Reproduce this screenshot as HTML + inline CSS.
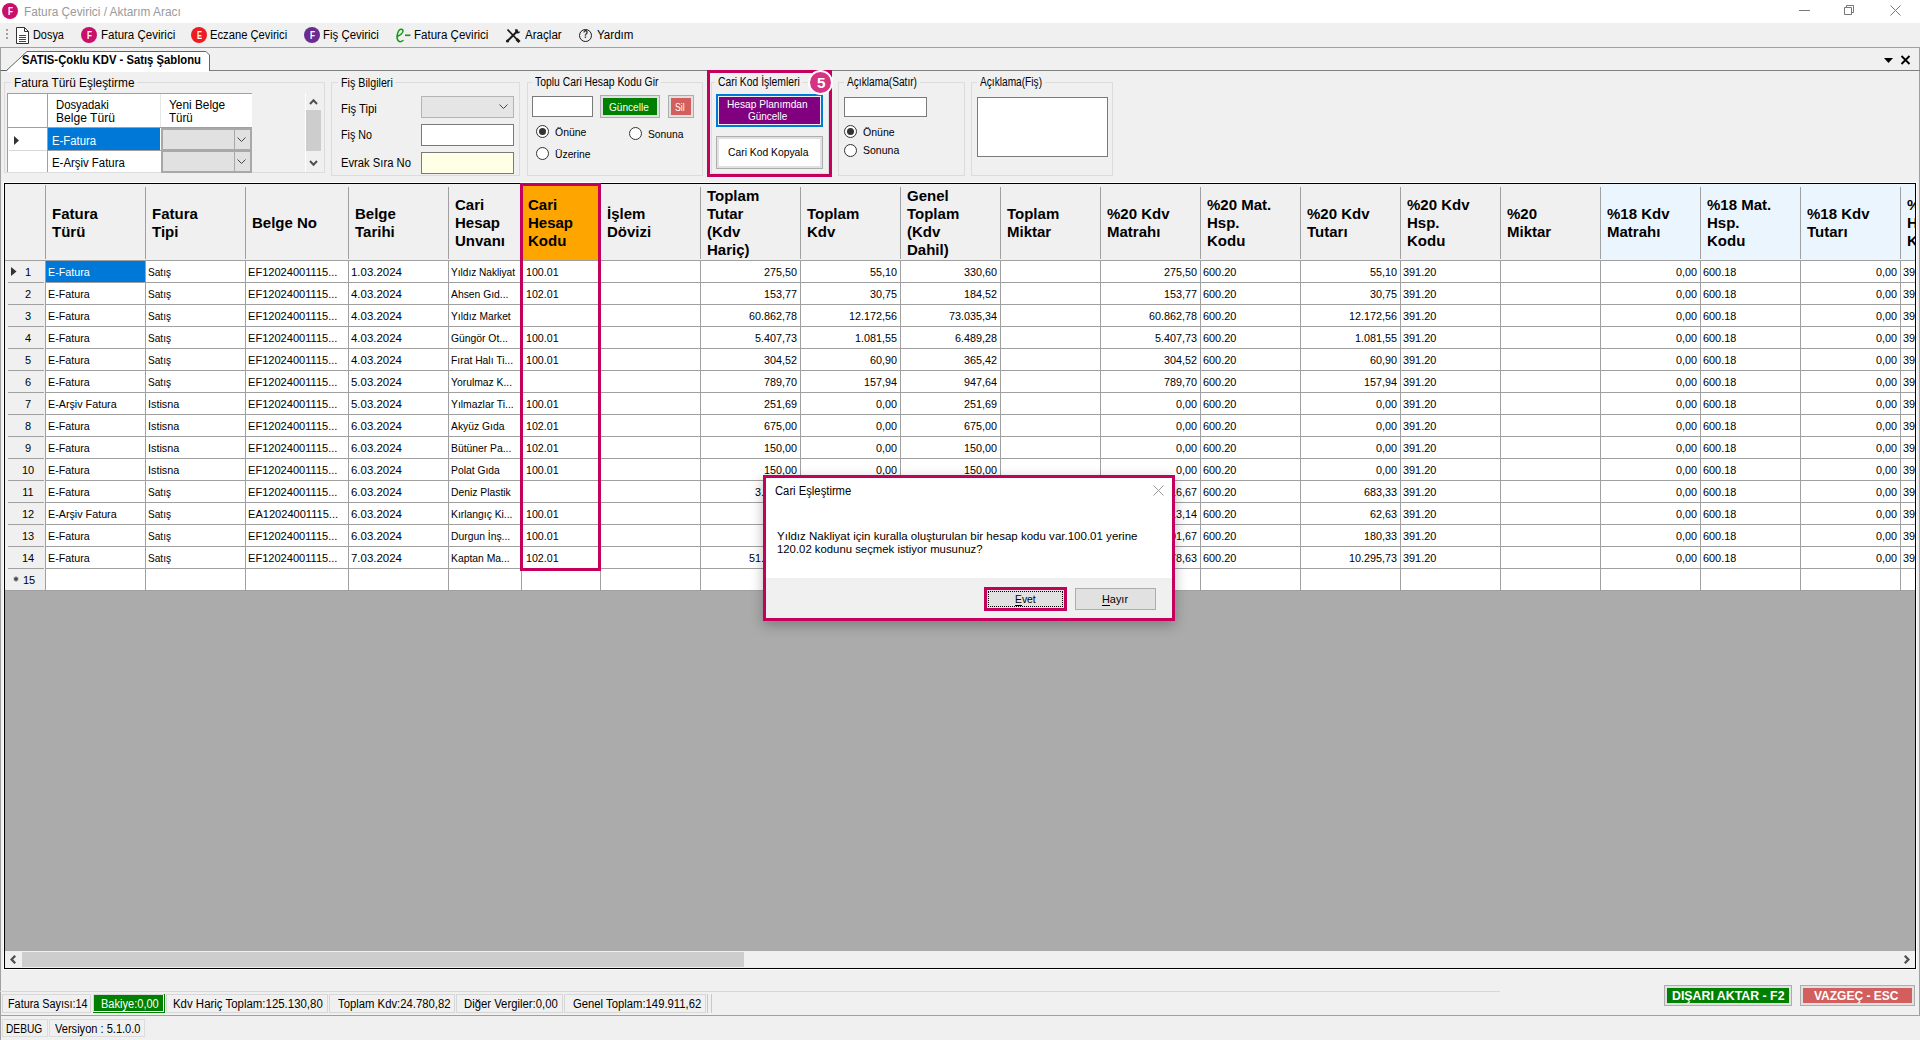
<!DOCTYPE html><html><head><meta charset="utf-8"><title>Fatura Çevirici</title><style>html,body{margin:0;padding:0;}body{width:1920px;height:1040px;overflow:hidden;position:relative;background:#f0f0f0;font-family:"Liberation Sans", sans-serif;}div{position:absolute;box-sizing:border-box;}svg{position:absolute;}.t{white-space:pre;}</style></head><body><div style="left:0px;top:0px;width:1920px;height:23px;background:#fff"></div><div style="left:2px;top:3px;width:16px;height:16px;border-radius:50%;background:#c8106a"></div><div class="t" style="left:7.50px;top:7.00px;font-size:10px;line-height:10px;font-weight:bold;color:#fff;transform:scaleX(0.8183);transform-origin:0 0;">F</div><div class="t" style="left:23.75px;top:6.00px;font-size:12px;line-height:12px;font-weight:normal;color:#9a9a9a;transform:scaleX(0.9876);transform-origin:0 0;">Fatura Çevirici / Aktarım Aracı</div><div style="left:1799px;top:10px;width:11px;height:1px;background:#777"></div><svg style="left:1844px;top:5px" width="11" height="11"><path d="M2.5 2.5V0.5H9.5V7.5H7.5M0.5 2.5H7.5V9.5H0.5Z" fill="none" stroke="#777"/></svg><svg style="left:1890px;top:5px" width="11" height="11"><path d="M0.5 0.5 L10.5 10.5 M10.5 0.5 L0.5 10.5" stroke="#777" stroke-width="1"/></svg><div style="left:6px;top:29px;width:2px;height:2px;background:#a0a0a0"></div><div style="left:6px;top:33px;width:2px;height:2px;background:#a0a0a0"></div><div style="left:6px;top:37px;width:2px;height:2px;background:#a0a0a0"></div><svg style="left:16px;top:27px" width="13" height="17"><path d="M0.5 0.5 H8.5 L12.5 4.5 V16.5 H0.5 Z" fill="#fff" stroke="#333"/><path d="M8.5 0.5V4.5H12.5" fill="none" stroke="#333"/><path d="M3 8.5H10M3 10.5H10M3 12.5H10M3 14.5H10" stroke="#444"/></svg><div class="t" style="left:33.30px;top:29.00px;font-size:12px;line-height:12px;font-weight:normal;color:#000;transform:scaleX(0.9083);transform-origin:0 0;">Dosya</div><div style="left:81px;top:27px;width:16px;height:16px;border-radius:50%;background:#c8106a"></div><div class="t" style="left:86.50px;top:31.00px;font-size:10px;line-height:10px;font-weight:bold;color:#fff;transform:scaleX(0.8183);transform-origin:0 0;">F</div><div class="t" style="left:100.50px;top:29.00px;font-size:12px;line-height:12px;font-weight:normal;color:#000;transform:scaleX(0.9593);transform-origin:0 0;">Fatura Çevirici</div><div style="left:191px;top:27px;width:16px;height:16px;border-radius:50%;background:#ec1c24"></div><div class="t" style="left:196.50px;top:31.00px;font-size:10px;line-height:10px;font-weight:bold;color:#fff;transform:scaleX(0.7496);transform-origin:0 0;">E</div><div class="t" style="left:210.30px;top:29.00px;font-size:12px;line-height:12px;font-weight:normal;color:#000;transform:scaleX(0.9336);transform-origin:0 0;">Eczane Çevirici</div><div style="left:304px;top:27px;width:16px;height:16px;border-radius:50%;background:#6b2c91"></div><div class="t" style="left:309.50px;top:31.00px;font-size:10px;line-height:10px;font-weight:bold;color:#fff;transform:scaleX(0.8183);transform-origin:0 0;">F</div><div class="t" style="left:323.00px;top:29.00px;font-size:12px;line-height:12px;font-weight:normal;color:#000;transform:scaleX(0.9511);transform-origin:0 0;">Fiş Çevirici</div><svg style="left:394px;top:26px" width="18" height="18"><path d="M3 10.5 C6 9.5 9.5 7 9 4.5 C8.6 2.5 5.5 2.8 4.3 5.5 C3 8.5 2.8 12.5 4 14.5 C5 16 7 16 9 14.5" fill="none" stroke="#119911" stroke-width="1.5" stroke-linecap="round"/><path d="M11 9.3H16.5" stroke="#119911" stroke-width="1.6"/></svg><div class="t" style="left:414.20px;top:29.00px;font-size:12px;line-height:12px;font-weight:normal;color:#000;transform:scaleX(0.9618);transform-origin:0 0;">Fatura Çevirici</div><svg style="left:505px;top:28px" width="16" height="15"><path d="M2.5 1.5 L13 12.5" stroke="#1a1a1a" stroke-width="1.8"/><path d="M11.5 11 L14.5 14" stroke="#1a1a1a" stroke-width="3"/><path d="M12 3.5 L2.5 13" stroke="#1a1a1a" stroke-width="2"/><path d="M10.5 1 C9.5 3 10.5 5.5 13 5.5 C14 5.5 15 4.5 15.3 3.8 L13.2 3.6 L12.6 1.4 Z" fill="#1a1a1a"/><circle cx="2.5" cy="13" r="1.6" fill="#1a1a1a"/></svg><div class="t" style="left:524.50px;top:29.00px;font-size:12px;line-height:12px;font-weight:normal;color:#000;transform:scaleX(0.9654);transform-origin:0 0;">Araçlar</div><div style="left:579px;top:29px;width:13px;height:13px;border-radius:50%;border:1.4px solid #1a1a1a"></div><div class="t" style="left:583.00px;top:30.00px;font-size:10px;line-height:10px;font-weight:bold;color:#1a1a1a;transform:scaleX(0.8183);transform-origin:0 0;">?</div><div class="t" style="left:596.60px;top:29.00px;font-size:12px;line-height:12px;font-weight:normal;color:#000;transform:scaleX(0.9633);transform-origin:0 0;">Yardım</div><div style="left:0px;top:47px;width:1920px;height:1px;background:#a0a0a0"></div><div style="left:0px;top:47px;width:1px;height:993px;background:#a0a0a0"></div><div style="left:1919px;top:47px;width:1px;height:969px;background:#a0a0a0"></div><div style="left:0px;top:70px;width:1920px;height:1px;background:#808080"></div><svg style="left:0;top:50px" width="212" height="22"><path d="M1 20.5 H6.5 L27 1.5 H206 L209.5 5 V21" fill="#fff" stroke="#646464" stroke-width="1"/><rect x="7.5" y="20" width="201.5" height="2" fill="#fff"/></svg><div class="t" style="left:22.00px;top:54.00px;font-size:12px;line-height:12px;font-weight:bold;color:#000;transform:scaleX(0.9398);transform-origin:0 0;">SATIS-Çoklu KDV - Satış Şablonu</div><svg style="left:1883px;top:57px" width="12" height="8"><path d="M1 1 H10 L5.5 6 Z" fill="#000"/></svg><svg style="left:1900px;top:55px" width="11" height="10"><path d="M1.5 1 L9.5 9 M9.5 1 L1.5 9" stroke="#000" stroke-width="1.8"/></svg><div style="left:4px;top:82px;width:321px;height:91px;border:1px solid #dcdcdc"></div><div style="left:10.5px;top:80px;width:126.5px;height:5px;background:#f0f0f0"></div><div class="t" style="left:13.50px;top:77.00px;font-size:12px;line-height:12px;font-weight:normal;color:#000;transform:scaleX(0.9892);transform-origin:0 0;">Fatura Türü Eşleştirme</div><div style="left:331px;top:82px;width:189px;height:94px;border:1px solid #dcdcdc"></div><div style="left:337.5px;top:80px;width:57.80000000000001px;height:5px;background:#f0f0f0"></div><div class="t" style="left:340.50px;top:77.00px;font-size:12px;line-height:12px;font-weight:normal;color:#000;transform:scaleX(0.8930);transform-origin:0 0;">Fiş Bilgileri</div><div style="left:527px;top:82px;width:176px;height:94px;border:1px solid #dcdcdc"></div><div style="left:531.6px;top:80px;width:129.39999999999998px;height:5px;background:#f0f0f0"></div><div class="t" style="left:534.60px;top:76.00px;font-size:12px;line-height:12px;font-weight:normal;color:#000;transform:scaleX(0.8645);transform-origin:0 0;">Toplu Cari Hesap Kodu Gir</div><div style="left:711px;top:82px;width:118px;height:92px;border:1px solid #dcdcdc"></div><div style="left:714.5px;top:80px;width:87.70000000000005px;height:5px;background:#f0f0f0"></div><div class="t" style="left:717.50px;top:76.00px;font-size:12px;line-height:12px;font-weight:normal;color:#000;transform:scaleX(0.8628);transform-origin:0 0;">Cari Kod İşlemleri</div><div style="left:838px;top:82px;width:127px;height:94px;border:1px solid #dcdcdc"></div><div style="left:844px;top:80px;width:76px;height:5px;background:#f0f0f0"></div><div class="t" style="left:847.00px;top:76.00px;font-size:12px;line-height:12px;font-weight:normal;color:#000;transform:scaleX(0.8466);transform-origin:0 0;">Açıklama(Satır)</div><div style="left:971px;top:82px;width:142px;height:94px;border:1px solid #dcdcdc"></div><div style="left:977px;top:80px;width:68px;height:5px;background:#f0f0f0"></div><div class="t" style="left:980.00px;top:76.00px;font-size:12px;line-height:12px;font-weight:normal;color:#000;transform:scaleX(0.8455);transform-origin:0 0;">Açıklama(Fiş)</div><div style="left:7px;top:93px;width:245px;height:79px;background:#fff;border-left:1px solid #a0a0a0;border-top:1px solid #a0a0a0"></div><div style="left:47px;top:94px;width:1px;height:78px;background:#a0a0a0"></div><div style="left:160px;top:94px;width:1px;height:34px;background:#e6e6e6"></div><div style="left:8px;top:127px;width:244px;height:1px;background:#a0a0a0"></div><div style="left:9px;top:150px;width:38px;height:1px;background:#d8d8d8"></div><div style="left:48px;top:150px;width:113px;height:1px;background:#a0a0a0"></div><div style="left:48px;top:128px;width:112px;height:22px;background:#0078d7"></div><div class="t" style="left:55.50px;top:99.00px;font-size:12px;line-height:12px;font-weight:normal;color:#000;transform:scaleX(0.9424);transform-origin:0 0;">Dosyadaki</div><div class="t" style="left:55.50px;top:112.00px;font-size:12px;line-height:12px;font-weight:normal;color:#000;transform:scaleX(1.0070);transform-origin:0 0;">Belge Türü</div><div class="t" style="left:169.30px;top:99.00px;font-size:12px;line-height:12px;font-weight:normal;color:#000;transform:scaleX(0.9870);transform-origin:0 0;">Yeni Belge</div><div class="t" style="left:169.30px;top:112.00px;font-size:12px;line-height:12px;font-weight:normal;color:#000;transform:scaleX(0.9606);transform-origin:0 0;">Türü</div><svg style="left:14px;top:136px" width="6" height="10"><path d="M0 0 L5 4.5 L0 9 Z" fill="#333"/></svg><div class="t" style="left:51.50px;top:135.00px;font-size:12px;line-height:12px;font-weight:normal;color:#fff;transform:scaleX(0.9423);transform-origin:0 0;">E-Fatura</div><div class="t" style="left:51.50px;top:157.00px;font-size:12px;line-height:12px;font-weight:normal;color:#000;transform:scaleX(0.9493);transform-origin:0 0;">E-Arşiv Fatura</div><div style="left:161px;top:128px;width:91px;height:23px;background:#e1e1e1;border:2px solid #a8a8a8"></div><div style="left:234px;top:130px;width:1px;height:19px;background:#a8a8a8"></div><svg style="left:237px;top:137px" width="10" height="6"><path d="M0.5 0.5 L4.5 4.5 L8.5 0.5" fill="none" stroke="#444" stroke-width="1"/></svg><div style="left:161px;top:150px;width:91px;height:23px;background:#e1e1e1;border:2px solid #a8a8a8"></div><div style="left:234px;top:152px;width:1px;height:19px;background:#a8a8a8"></div><svg style="left:237px;top:159px" width="10" height="6"><path d="M0.5 0.5 L4.5 4.5 L8.5 0.5" fill="none" stroke="#444" stroke-width="1"/></svg><div style="left:306px;top:110px;width:15px;height:41px;background:#cdcdcd"></div><svg style="left:309px;top:98px" width="10" height="8"><path d="M1 6 L4.5 2.2 L8 6" fill="none" stroke="#505050" stroke-width="2"/></svg><div style="left:305px;top:93px;width:1px;height:79px;background:#fff"></div><svg style="left:309px;top:159px" width="10" height="8"><path d="M1 2 L4.5 5.8 L8 2" fill="none" stroke="#505050" stroke-width="2"/></svg><div class="t" style="left:340.50px;top:103.00px;font-size:12px;line-height:12px;font-weight:normal;color:#000;transform:scaleX(0.9394);transform-origin:0 0;">Fiş Tipi</div><div class="t" style="left:340.50px;top:129.00px;font-size:12px;line-height:12px;font-weight:normal;color:#000;transform:scaleX(0.8913);transform-origin:0 0;">Fiş No</div><div class="t" style="left:340.50px;top:157.00px;font-size:12px;line-height:12px;font-weight:normal;color:#000;transform:scaleX(0.9359);transform-origin:0 0;">Evrak Sıra No</div><div style="left:421px;top:96px;width:93px;height:22px;background:#e5e5e5;border:1px solid #b4b4b4"></div><svg style="left:499px;top:104px" width="10" height="6"><path d="M0.5 0.5 L4.5 4.5 L8.5 0.5" fill="none" stroke="#444" stroke-width="1"/></svg><div style="left:421px;top:124px;width:93px;height:22px;background:#fff;border:1px solid #7a7a7a"></div><div style="left:421px;top:152px;width:93px;height:22px;background:#ffffe6;border:1px solid #7a7a7a"></div><div style="left:532px;top:96px;width:61px;height:21px;background:#fff;border:1px solid #7a7a7a"></div><div style="left:600px;top:95px;width:60px;height:23px;background:#008000;border:1px solid #adadad;box-shadow:inset 0 0 0 2px #e1e1e1"></div><div class="t" style="left:608.60px;top:102.00px;font-size:11px;line-height:11px;font-weight:normal;color:#fff;transform:scaleX(0.9167);transform-origin:0 0;">Güncelle</div><div style="left:668px;top:95px;width:26px;height:23px;background:#d25e5e;border:1px solid #adadad;box-shadow:inset 0 0 0 2px #e1e1e1"></div><div class="t" style="left:674.70px;top:102.00px;font-size:11px;line-height:11px;font-weight:normal;color:#fff;transform:scaleX(0.7937);transform-origin:0 0;">Sil</div><div style="left:536.0px;top:125.0px;width:13px;height:13px;border-radius:50%;background:#fff;border:1px solid #333"></div><div style="left:539.0px;top:128.0px;width:7px;height:7px;border-radius:50%;background:#333"></div><div class="t" style="left:554.70px;top:127.00px;font-size:11px;line-height:11px;font-weight:normal;color:#000;transform:scaleX(0.9509);transform-origin:0 0;">Önüne</div><div style="left:629.0px;top:127.0px;width:13px;height:13px;border-radius:50%;background:#fff;border:1px solid #333"></div><div class="t" style="left:647.70px;top:129.00px;font-size:11px;line-height:11px;font-weight:normal;color:#000;transform:scaleX(0.9357);transform-origin:0 0;">Sonuna</div><div style="left:536.0px;top:147.0px;width:13px;height:13px;border-radius:50%;background:#fff;border:1px solid #333"></div><div class="t" style="left:554.70px;top:149.00px;font-size:11px;line-height:11px;font-weight:normal;color:#000;transform:scaleX(0.9392);transform-origin:0 0;">Üzerine</div><div style="left:707px;top:70px;width:125px;height:107px;border:3px solid #c4005c"></div><div style="left:716px;top:94px;width:107px;height:33px;background:#800080;border:2px solid #0078d7;box-shadow:inset 0 0 0 1px #f0f0f0"></div><div class="t" style="left:727.40px;top:99.00px;font-size:11px;line-height:11px;font-weight:normal;color:#fff;transform:scaleX(0.9218);transform-origin:0 0;">Hesap Planımdan</div><div class="t" style="left:747.90px;top:111.00px;font-size:11px;line-height:11px;font-weight:normal;color:#fff;transform:scaleX(0.9052);transform-origin:0 0;">Güncelle</div><div style="left:716px;top:136px;width:107px;height:33px;background:#fff;border:1px solid #adadad;box-shadow:inset 0 0 0 2px #e1e1e1"></div><div class="t" style="left:727.60px;top:147.00px;font-size:11px;line-height:11px;font-weight:normal;color:#000;transform:scaleX(0.9391);transform-origin:0 0;">Cari Kod Kopyala</div><div style="left:808px;top:70px;width:25px;height:25px;border-radius:50%;background:#d63384;border:2px solid #fff"></div><div class="t" style="left:816.50px;top:76.00px;font-size:14px;line-height:14px;font-weight:bold;color:#fff;transform:scaleX(1.0920);transform-origin:0 0;">5</div><div style="left:844px;top:97px;width:83px;height:20px;background:#fff;border:1px solid #7a7a7a"></div><div style="left:844.0px;top:124.75px;width:13px;height:13px;border-radius:50%;background:#fff;border:1px solid #333"></div><div style="left:847.0px;top:127.75px;width:7px;height:7px;border-radius:50%;background:#333"></div><div class="t" style="left:862.50px;top:127.00px;font-size:11px;line-height:11px;font-weight:normal;color:#000;transform:scaleX(0.9615);transform-origin:0 0;">Önüne</div><div style="left:844.0px;top:143.5px;width:13px;height:13px;border-radius:50%;background:#fff;border:1px solid #333"></div><div class="t" style="left:863.00px;top:145.00px;font-size:11px;line-height:11px;font-weight:normal;color:#000;transform:scaleX(0.9555);transform-origin:0 0;">Sonuna</div><div style="left:977px;top:97px;width:131px;height:60px;background:#fff;border:1px solid #7a7a7a"></div><div style="left:4px;top:183px;width:1912px;height:786px;border:1px solid #000;background:#ababab"></div><div style="left:3px;top:182px;width:1914px;height:1px;background:#fff"></div><div style="left:1916px;top:182px;width:1px;height:788px;background:#fff"></div><div style="left:3px;top:969px;width:1914px;height:1px;background:#fff"></div><div style="left:3px;top:182px;width:1px;height:788px;background:#fff"></div><div style="left:5px;top:184px;width:1910px;height:76px;background:#f0f0f0"></div><div style="left:1601px;top:184px;width:314px;height:76px;background:#ebf5fd"></div><div style="left:522px;top:184px;width:78px;height:76px;background:#ffa500"></div><div style="left:5px;top:261px;width:1910px;height:330px;background:#fff"></div><div style="left:5px;top:261px;width:40px;height:330px;background:#f0f0f0"></div><div style="left:5px;top:260px;width:1910px;height:1px;background:#a0a0a0"></div><div style="left:46px;top:282px;width:1869px;height:1px;background:#a0a0a0"></div><div style="left:8px;top:282px;width:36px;height:1px;background:#a0a0a0"></div><div style="left:46px;top:304px;width:1869px;height:1px;background:#a0a0a0"></div><div style="left:8px;top:304px;width:36px;height:1px;background:#a0a0a0"></div><div style="left:46px;top:326px;width:1869px;height:1px;background:#a0a0a0"></div><div style="left:8px;top:326px;width:36px;height:1px;background:#a0a0a0"></div><div style="left:46px;top:348px;width:1869px;height:1px;background:#a0a0a0"></div><div style="left:8px;top:348px;width:36px;height:1px;background:#a0a0a0"></div><div style="left:46px;top:370px;width:1869px;height:1px;background:#a0a0a0"></div><div style="left:8px;top:370px;width:36px;height:1px;background:#a0a0a0"></div><div style="left:46px;top:392px;width:1869px;height:1px;background:#a0a0a0"></div><div style="left:8px;top:392px;width:36px;height:1px;background:#a0a0a0"></div><div style="left:46px;top:414px;width:1869px;height:1px;background:#a0a0a0"></div><div style="left:8px;top:414px;width:36px;height:1px;background:#a0a0a0"></div><div style="left:46px;top:436px;width:1869px;height:1px;background:#a0a0a0"></div><div style="left:8px;top:436px;width:36px;height:1px;background:#a0a0a0"></div><div style="left:46px;top:458px;width:1869px;height:1px;background:#a0a0a0"></div><div style="left:8px;top:458px;width:36px;height:1px;background:#a0a0a0"></div><div style="left:46px;top:480px;width:1869px;height:1px;background:#a0a0a0"></div><div style="left:8px;top:480px;width:36px;height:1px;background:#a0a0a0"></div><div style="left:46px;top:502px;width:1869px;height:1px;background:#a0a0a0"></div><div style="left:8px;top:502px;width:36px;height:1px;background:#a0a0a0"></div><div style="left:46px;top:524px;width:1869px;height:1px;background:#a0a0a0"></div><div style="left:8px;top:524px;width:36px;height:1px;background:#a0a0a0"></div><div style="left:46px;top:546px;width:1869px;height:1px;background:#a0a0a0"></div><div style="left:8px;top:546px;width:36px;height:1px;background:#a0a0a0"></div><div style="left:46px;top:568px;width:1869px;height:1px;background:#a0a0a0"></div><div style="left:8px;top:568px;width:36px;height:1px;background:#a0a0a0"></div><div style="left:46px;top:590px;width:1869px;height:1px;background:#a0a0a0"></div><div style="left:5px;top:590px;width:40px;height:1px;background:#a0a0a0"></div><div style="left:45px;top:185px;width:1px;height:74px;background:#a0a0a0"></div><div style="left:45px;top:261px;width:1px;height:330px;background:#a0a0a0"></div><div style="left:145px;top:187px;width:1px;height:72px;background:#a0a0a0"></div><div style="left:145px;top:261px;width:1px;height:330px;background:#a0a0a0"></div><div style="left:245px;top:187px;width:1px;height:72px;background:#a0a0a0"></div><div style="left:245px;top:261px;width:1px;height:330px;background:#a0a0a0"></div><div style="left:348px;top:187px;width:1px;height:72px;background:#a0a0a0"></div><div style="left:348px;top:261px;width:1px;height:330px;background:#a0a0a0"></div><div style="left:448px;top:187px;width:1px;height:72px;background:#a0a0a0"></div><div style="left:448px;top:261px;width:1px;height:330px;background:#a0a0a0"></div><div style="left:521px;top:187px;width:1px;height:72px;background:#a0a0a0"></div><div style="left:521px;top:261px;width:1px;height:330px;background:#a0a0a0"></div><div style="left:600px;top:187px;width:1px;height:72px;background:#a0a0a0"></div><div style="left:600px;top:261px;width:1px;height:330px;background:#a0a0a0"></div><div style="left:700px;top:187px;width:1px;height:72px;background:#a0a0a0"></div><div style="left:700px;top:261px;width:1px;height:330px;background:#a0a0a0"></div><div style="left:800px;top:187px;width:1px;height:72px;background:#a0a0a0"></div><div style="left:800px;top:261px;width:1px;height:330px;background:#a0a0a0"></div><div style="left:900px;top:187px;width:1px;height:72px;background:#a0a0a0"></div><div style="left:900px;top:261px;width:1px;height:330px;background:#a0a0a0"></div><div style="left:1000px;top:187px;width:1px;height:72px;background:#a0a0a0"></div><div style="left:1000px;top:261px;width:1px;height:330px;background:#a0a0a0"></div><div style="left:1100px;top:187px;width:1px;height:72px;background:#a0a0a0"></div><div style="left:1100px;top:261px;width:1px;height:330px;background:#a0a0a0"></div><div style="left:1200px;top:187px;width:1px;height:72px;background:#a0a0a0"></div><div style="left:1200px;top:261px;width:1px;height:330px;background:#a0a0a0"></div><div style="left:1300px;top:187px;width:1px;height:72px;background:#a0a0a0"></div><div style="left:1300px;top:261px;width:1px;height:330px;background:#a0a0a0"></div><div style="left:1400px;top:187px;width:1px;height:72px;background:#a0a0a0"></div><div style="left:1400px;top:261px;width:1px;height:330px;background:#a0a0a0"></div><div style="left:1500px;top:187px;width:1px;height:72px;background:#a0a0a0"></div><div style="left:1500px;top:261px;width:1px;height:330px;background:#a0a0a0"></div><div style="left:1600px;top:187px;width:1px;height:72px;background:#a0a0a0"></div><div style="left:1600px;top:261px;width:1px;height:330px;background:#a0a0a0"></div><div style="left:1700px;top:187px;width:1px;height:72px;background:#a0a0a0"></div><div style="left:1700px;top:261px;width:1px;height:330px;background:#a0a0a0"></div><div style="left:1800px;top:187px;width:1px;height:72px;background:#a0a0a0"></div><div style="left:1800px;top:261px;width:1px;height:330px;background:#a0a0a0"></div><div style="left:1900px;top:187px;width:1px;height:72px;background:#a0a0a0"></div><div style="left:1900px;top:261px;width:1px;height:330px;background:#a0a0a0"></div><div style="left:5px;top:184px;width:1910px;height:76px;overflow:hidden"><div class="t" style="left:47px;top:22.00px;font-size:15px;line-height:15px;font-weight:bold">Fatura</div><div class="t" style="left:47px;top:40.00px;font-size:15px;line-height:15px;font-weight:bold">Türü</div><div class="t" style="left:147px;top:22.00px;font-size:15px;line-height:15px;font-weight:bold">Fatura</div><div class="t" style="left:147px;top:40.00px;font-size:15px;line-height:15px;font-weight:bold">Tipi</div><div class="t" style="left:247px;top:31.00px;font-size:15px;line-height:15px;font-weight:bold">Belge No</div><div class="t" style="left:350px;top:22.00px;font-size:15px;line-height:15px;font-weight:bold">Belge</div><div class="t" style="left:350px;top:40.00px;font-size:15px;line-height:15px;font-weight:bold">Tarihi</div><div class="t" style="left:450px;top:13.00px;font-size:15px;line-height:15px;font-weight:bold">Cari</div><div class="t" style="left:450px;top:31.00px;font-size:15px;line-height:15px;font-weight:bold">Hesap</div><div class="t" style="left:450px;top:49.00px;font-size:15px;line-height:15px;font-weight:bold">Unvanı</div><div class="t" style="left:523px;top:13.00px;font-size:15px;line-height:15px;font-weight:bold">Cari</div><div class="t" style="left:523px;top:31.00px;font-size:15px;line-height:15px;font-weight:bold">Hesap</div><div class="t" style="left:523px;top:49.00px;font-size:15px;line-height:15px;font-weight:bold">Kodu</div><div class="t" style="left:602px;top:22.00px;font-size:15px;line-height:15px;font-weight:bold">İşlem</div><div class="t" style="left:602px;top:40.00px;font-size:15px;line-height:15px;font-weight:bold">Dövizi</div><div class="t" style="left:702px;top:4.00px;font-size:15px;line-height:15px;font-weight:bold">Toplam</div><div class="t" style="left:702px;top:22.00px;font-size:15px;line-height:15px;font-weight:bold">Tutar</div><div class="t" style="left:702px;top:40.00px;font-size:15px;line-height:15px;font-weight:bold">(Kdv</div><div class="t" style="left:702px;top:58.00px;font-size:15px;line-height:15px;font-weight:bold">Hariç)</div><div class="t" style="left:802px;top:22.00px;font-size:15px;line-height:15px;font-weight:bold">Toplam</div><div class="t" style="left:802px;top:40.00px;font-size:15px;line-height:15px;font-weight:bold">Kdv</div><div class="t" style="left:902px;top:4.00px;font-size:15px;line-height:15px;font-weight:bold">Genel</div><div class="t" style="left:902px;top:22.00px;font-size:15px;line-height:15px;font-weight:bold">Toplam</div><div class="t" style="left:902px;top:40.00px;font-size:15px;line-height:15px;font-weight:bold">(Kdv</div><div class="t" style="left:902px;top:58.00px;font-size:15px;line-height:15px;font-weight:bold">Dahil)</div><div class="t" style="left:1002px;top:22.00px;font-size:15px;line-height:15px;font-weight:bold">Toplam</div><div class="t" style="left:1002px;top:40.00px;font-size:15px;line-height:15px;font-weight:bold">Miktar</div><div class="t" style="left:1102px;top:22.00px;font-size:15px;line-height:15px;font-weight:bold">%20 Kdv</div><div class="t" style="left:1102px;top:40.00px;font-size:15px;line-height:15px;font-weight:bold">Matrahı</div><div class="t" style="left:1202px;top:13.00px;font-size:15px;line-height:15px;font-weight:bold">%20 Mat.</div><div class="t" style="left:1202px;top:31.00px;font-size:15px;line-height:15px;font-weight:bold">Hsp.</div><div class="t" style="left:1202px;top:49.00px;font-size:15px;line-height:15px;font-weight:bold">Kodu</div><div class="t" style="left:1302px;top:22.00px;font-size:15px;line-height:15px;font-weight:bold">%20 Kdv</div><div class="t" style="left:1302px;top:40.00px;font-size:15px;line-height:15px;font-weight:bold">Tutarı</div><div class="t" style="left:1402px;top:13.00px;font-size:15px;line-height:15px;font-weight:bold">%20 Kdv</div><div class="t" style="left:1402px;top:31.00px;font-size:15px;line-height:15px;font-weight:bold">Hsp.</div><div class="t" style="left:1402px;top:49.00px;font-size:15px;line-height:15px;font-weight:bold">Kodu</div><div class="t" style="left:1502px;top:22.00px;font-size:15px;line-height:15px;font-weight:bold">%20</div><div class="t" style="left:1502px;top:40.00px;font-size:15px;line-height:15px;font-weight:bold">Miktar</div><div class="t" style="left:1602px;top:22.00px;font-size:15px;line-height:15px;font-weight:bold">%18 Kdv</div><div class="t" style="left:1602px;top:40.00px;font-size:15px;line-height:15px;font-weight:bold">Matrahı</div><div class="t" style="left:1702px;top:13.00px;font-size:15px;line-height:15px;font-weight:bold">%18 Mat.</div><div class="t" style="left:1702px;top:31.00px;font-size:15px;line-height:15px;font-weight:bold">Hsp.</div><div class="t" style="left:1702px;top:49.00px;font-size:15px;line-height:15px;font-weight:bold">Kodu</div><div class="t" style="left:1802px;top:22.00px;font-size:15px;line-height:15px;font-weight:bold">%18 Kdv</div><div class="t" style="left:1802px;top:40.00px;font-size:15px;line-height:15px;font-weight:bold">Tutarı</div><div class="t" style="left:1902px;top:13.00px;font-size:15px;line-height:15px;font-weight:bold">%18 Kdv</div><div class="t" style="left:1902px;top:31.00px;font-size:15px;line-height:15px;font-weight:bold">Hsp.</div><div class="t" style="left:1902px;top:49.00px;font-size:15px;line-height:15px;font-weight:bold">Kodu</div></div><div style="left:46px;top:261px;width:99px;height:21px;background:#0078d7"></div><div style="left:5px;top:261px;width:1910px;height:330px;overflow:hidden"><div class="t" style="left:43px;top:6.00px;font-size:11px;line-height:11px;color:#fff;transform:scaleX(0.977);transform-origin:0 0">E-Fatura</div><div class="t" style="left:143px;top:6.00px;font-size:11px;line-height:11px;color:#000;transform:scaleX(0.917);transform-origin:0 0">Satış</div><div class="t" style="left:243px;top:6.00px;font-size:11px;line-height:11px;color:#000;transform:scaleX(1.006);transform-origin:0 0">EF12024001115...</div><div class="t" style="left:346px;top:6.00px;font-size:11px;line-height:11px;color:#000;transform:scaleX(1.040);transform-origin:0 0">1.03.2024</div><div class="t" style="left:446px;top:6.00px;font-size:11px;line-height:11px;color:#000;transform:scaleX(0.918);transform-origin:0 0">Yıldız Nakliyat</div><div class="t" style="left:520.5px;top:6.00px;font-size:11px;line-height:11px;color:#000;transform:scaleX(0.970);transform-origin:0 0">100.01</div><div class="t" style="left:495px;width:297px;text-align:right;top:6.00px;font-size:11px;line-height:11px;color:#000;transform:scaleX(0.980);transform-origin:100% 0">275,50</div><div class="t" style="left:595px;width:297px;text-align:right;top:6.00px;font-size:11px;line-height:11px;color:#000;transform:scaleX(0.980);transform-origin:100% 0">55,10</div><div class="t" style="left:695px;width:297px;text-align:right;top:6.00px;font-size:11px;line-height:11px;color:#000;transform:scaleX(0.980);transform-origin:100% 0">330,60</div><div class="t" style="left:895px;width:297px;text-align:right;top:6.00px;font-size:11px;line-height:11px;color:#000;transform:scaleX(0.980);transform-origin:100% 0">275,50</div><div class="t" style="left:1198px;top:6.00px;font-size:11px;line-height:11px;color:#000;transform:scaleX(0.990);transform-origin:0 0">600.20</div><div class="t" style="left:1095px;width:297px;text-align:right;top:6.00px;font-size:11px;line-height:11px;color:#000;transform:scaleX(0.980);transform-origin:100% 0">55,10</div><div class="t" style="left:1398px;top:6.00px;font-size:11px;line-height:11px;color:#000;transform:scaleX(0.990);transform-origin:0 0">391.20</div><div class="t" style="left:1395px;width:297px;text-align:right;top:6.00px;font-size:11px;line-height:11px;color:#000;transform:scaleX(0.980);transform-origin:100% 0">0,00</div><div class="t" style="left:1698px;top:6.00px;font-size:11px;line-height:11px;color:#000;transform:scaleX(0.990);transform-origin:0 0">600.18</div><div class="t" style="left:1595px;width:297px;text-align:right;top:6.00px;font-size:11px;line-height:11px;color:#000;transform:scaleX(0.980);transform-origin:100% 0">0,00</div><div class="t" style="left:1898px;top:6.00px;font-size:11px;line-height:11px;color:#000;transform:scaleX(0.990);transform-origin:0 0">39</div><div class="t" style="left:3px;width:40px;text-align:center;top:6.00px;font-size:11px;line-height:11px">1</div><div class="t" style="left:43px;top:28.00px;font-size:11px;line-height:11px;color:#000;transform:scaleX(0.977);transform-origin:0 0">E-Fatura</div><div class="t" style="left:143px;top:28.00px;font-size:11px;line-height:11px;color:#000;transform:scaleX(0.917);transform-origin:0 0">Satış</div><div class="t" style="left:243px;top:28.00px;font-size:11px;line-height:11px;color:#000;transform:scaleX(1.006);transform-origin:0 0">EF12024001115...</div><div class="t" style="left:346px;top:28.00px;font-size:11px;line-height:11px;color:#000;transform:scaleX(1.040);transform-origin:0 0">4.03.2024</div><div class="t" style="left:446px;top:28.00px;font-size:11px;line-height:11px;color:#000;transform:scaleX(0.940);transform-origin:0 0">Ahsen Gıd...</div><div class="t" style="left:520.5px;top:28.00px;font-size:11px;line-height:11px;color:#000;transform:scaleX(0.970);transform-origin:0 0">102.01</div><div class="t" style="left:495px;width:297px;text-align:right;top:28.00px;font-size:11px;line-height:11px;color:#000;transform:scaleX(0.980);transform-origin:100% 0">153,77</div><div class="t" style="left:595px;width:297px;text-align:right;top:28.00px;font-size:11px;line-height:11px;color:#000;transform:scaleX(0.980);transform-origin:100% 0">30,75</div><div class="t" style="left:695px;width:297px;text-align:right;top:28.00px;font-size:11px;line-height:11px;color:#000;transform:scaleX(0.980);transform-origin:100% 0">184,52</div><div class="t" style="left:895px;width:297px;text-align:right;top:28.00px;font-size:11px;line-height:11px;color:#000;transform:scaleX(0.980);transform-origin:100% 0">153,77</div><div class="t" style="left:1198px;top:28.00px;font-size:11px;line-height:11px;color:#000;transform:scaleX(0.990);transform-origin:0 0">600.20</div><div class="t" style="left:1095px;width:297px;text-align:right;top:28.00px;font-size:11px;line-height:11px;color:#000;transform:scaleX(0.980);transform-origin:100% 0">30,75</div><div class="t" style="left:1398px;top:28.00px;font-size:11px;line-height:11px;color:#000;transform:scaleX(0.990);transform-origin:0 0">391.20</div><div class="t" style="left:1395px;width:297px;text-align:right;top:28.00px;font-size:11px;line-height:11px;color:#000;transform:scaleX(0.980);transform-origin:100% 0">0,00</div><div class="t" style="left:1698px;top:28.00px;font-size:11px;line-height:11px;color:#000;transform:scaleX(0.990);transform-origin:0 0">600.18</div><div class="t" style="left:1595px;width:297px;text-align:right;top:28.00px;font-size:11px;line-height:11px;color:#000;transform:scaleX(0.980);transform-origin:100% 0">0,00</div><div class="t" style="left:1898px;top:28.00px;font-size:11px;line-height:11px;color:#000;transform:scaleX(0.990);transform-origin:0 0">39</div><div class="t" style="left:3px;width:40px;text-align:center;top:28.00px;font-size:11px;line-height:11px">2</div><div class="t" style="left:43px;top:50.00px;font-size:11px;line-height:11px;color:#000;transform:scaleX(0.977);transform-origin:0 0">E-Fatura</div><div class="t" style="left:143px;top:50.00px;font-size:11px;line-height:11px;color:#000;transform:scaleX(0.917);transform-origin:0 0">Satış</div><div class="t" style="left:243px;top:50.00px;font-size:11px;line-height:11px;color:#000;transform:scaleX(1.006);transform-origin:0 0">EF12024001115...</div><div class="t" style="left:346px;top:50.00px;font-size:11px;line-height:11px;color:#000;transform:scaleX(1.040);transform-origin:0 0">4.03.2024</div><div class="t" style="left:446px;top:50.00px;font-size:11px;line-height:11px;color:#000;transform:scaleX(0.930);transform-origin:0 0">Yıldız Market</div><div class="t" style="left:495px;width:297px;text-align:right;top:50.00px;font-size:11px;line-height:11px;color:#000;transform:scaleX(0.980);transform-origin:100% 0">60.862,78</div><div class="t" style="left:595px;width:297px;text-align:right;top:50.00px;font-size:11px;line-height:11px;color:#000;transform:scaleX(0.980);transform-origin:100% 0">12.172,56</div><div class="t" style="left:695px;width:297px;text-align:right;top:50.00px;font-size:11px;line-height:11px;color:#000;transform:scaleX(0.980);transform-origin:100% 0">73.035,34</div><div class="t" style="left:895px;width:297px;text-align:right;top:50.00px;font-size:11px;line-height:11px;color:#000;transform:scaleX(0.980);transform-origin:100% 0">60.862,78</div><div class="t" style="left:1198px;top:50.00px;font-size:11px;line-height:11px;color:#000;transform:scaleX(0.990);transform-origin:0 0">600.20</div><div class="t" style="left:1095px;width:297px;text-align:right;top:50.00px;font-size:11px;line-height:11px;color:#000;transform:scaleX(0.980);transform-origin:100% 0">12.172,56</div><div class="t" style="left:1398px;top:50.00px;font-size:11px;line-height:11px;color:#000;transform:scaleX(0.990);transform-origin:0 0">391.20</div><div class="t" style="left:1395px;width:297px;text-align:right;top:50.00px;font-size:11px;line-height:11px;color:#000;transform:scaleX(0.980);transform-origin:100% 0">0,00</div><div class="t" style="left:1698px;top:50.00px;font-size:11px;line-height:11px;color:#000;transform:scaleX(0.990);transform-origin:0 0">600.18</div><div class="t" style="left:1595px;width:297px;text-align:right;top:50.00px;font-size:11px;line-height:11px;color:#000;transform:scaleX(0.980);transform-origin:100% 0">0,00</div><div class="t" style="left:1898px;top:50.00px;font-size:11px;line-height:11px;color:#000;transform:scaleX(0.990);transform-origin:0 0">39</div><div class="t" style="left:3px;width:40px;text-align:center;top:50.00px;font-size:11px;line-height:11px">3</div><div class="t" style="left:43px;top:72.00px;font-size:11px;line-height:11px;color:#000;transform:scaleX(0.977);transform-origin:0 0">E-Fatura</div><div class="t" style="left:143px;top:72.00px;font-size:11px;line-height:11px;color:#000;transform:scaleX(0.917);transform-origin:0 0">Satış</div><div class="t" style="left:243px;top:72.00px;font-size:11px;line-height:11px;color:#000;transform:scaleX(1.006);transform-origin:0 0">EF12024001115...</div><div class="t" style="left:346px;top:72.00px;font-size:11px;line-height:11px;color:#000;transform:scaleX(1.040);transform-origin:0 0">4.03.2024</div><div class="t" style="left:446px;top:72.00px;font-size:11px;line-height:11px;color:#000;transform:scaleX(0.940);transform-origin:0 0">Güngör Ot...</div><div class="t" style="left:520.5px;top:72.00px;font-size:11px;line-height:11px;color:#000;transform:scaleX(0.970);transform-origin:0 0">100.01</div><div class="t" style="left:495px;width:297px;text-align:right;top:72.00px;font-size:11px;line-height:11px;color:#000;transform:scaleX(0.980);transform-origin:100% 0">5.407,73</div><div class="t" style="left:595px;width:297px;text-align:right;top:72.00px;font-size:11px;line-height:11px;color:#000;transform:scaleX(0.980);transform-origin:100% 0">1.081,55</div><div class="t" style="left:695px;width:297px;text-align:right;top:72.00px;font-size:11px;line-height:11px;color:#000;transform:scaleX(0.980);transform-origin:100% 0">6.489,28</div><div class="t" style="left:895px;width:297px;text-align:right;top:72.00px;font-size:11px;line-height:11px;color:#000;transform:scaleX(0.980);transform-origin:100% 0">5.407,73</div><div class="t" style="left:1198px;top:72.00px;font-size:11px;line-height:11px;color:#000;transform:scaleX(0.990);transform-origin:0 0">600.20</div><div class="t" style="left:1095px;width:297px;text-align:right;top:72.00px;font-size:11px;line-height:11px;color:#000;transform:scaleX(0.980);transform-origin:100% 0">1.081,55</div><div class="t" style="left:1398px;top:72.00px;font-size:11px;line-height:11px;color:#000;transform:scaleX(0.990);transform-origin:0 0">391.20</div><div class="t" style="left:1395px;width:297px;text-align:right;top:72.00px;font-size:11px;line-height:11px;color:#000;transform:scaleX(0.980);transform-origin:100% 0">0,00</div><div class="t" style="left:1698px;top:72.00px;font-size:11px;line-height:11px;color:#000;transform:scaleX(0.990);transform-origin:0 0">600.18</div><div class="t" style="left:1595px;width:297px;text-align:right;top:72.00px;font-size:11px;line-height:11px;color:#000;transform:scaleX(0.980);transform-origin:100% 0">0,00</div><div class="t" style="left:1898px;top:72.00px;font-size:11px;line-height:11px;color:#000;transform:scaleX(0.990);transform-origin:0 0">39</div><div class="t" style="left:3px;width:40px;text-align:center;top:72.00px;font-size:11px;line-height:11px">4</div><div class="t" style="left:43px;top:94.00px;font-size:11px;line-height:11px;color:#000;transform:scaleX(0.977);transform-origin:0 0">E-Fatura</div><div class="t" style="left:143px;top:94.00px;font-size:11px;line-height:11px;color:#000;transform:scaleX(0.917);transform-origin:0 0">Satış</div><div class="t" style="left:243px;top:94.00px;font-size:11px;line-height:11px;color:#000;transform:scaleX(1.006);transform-origin:0 0">EF12024001115...</div><div class="t" style="left:346px;top:94.00px;font-size:11px;line-height:11px;color:#000;transform:scaleX(1.040);transform-origin:0 0">4.03.2024</div><div class="t" style="left:446px;top:94.00px;font-size:11px;line-height:11px;color:#000;transform:scaleX(0.940);transform-origin:0 0">Fırat Halı Ti...</div><div class="t" style="left:520.5px;top:94.00px;font-size:11px;line-height:11px;color:#000;transform:scaleX(0.970);transform-origin:0 0">100.01</div><div class="t" style="left:495px;width:297px;text-align:right;top:94.00px;font-size:11px;line-height:11px;color:#000;transform:scaleX(0.980);transform-origin:100% 0">304,52</div><div class="t" style="left:595px;width:297px;text-align:right;top:94.00px;font-size:11px;line-height:11px;color:#000;transform:scaleX(0.980);transform-origin:100% 0">60,90</div><div class="t" style="left:695px;width:297px;text-align:right;top:94.00px;font-size:11px;line-height:11px;color:#000;transform:scaleX(0.980);transform-origin:100% 0">365,42</div><div class="t" style="left:895px;width:297px;text-align:right;top:94.00px;font-size:11px;line-height:11px;color:#000;transform:scaleX(0.980);transform-origin:100% 0">304,52</div><div class="t" style="left:1198px;top:94.00px;font-size:11px;line-height:11px;color:#000;transform:scaleX(0.990);transform-origin:0 0">600.20</div><div class="t" style="left:1095px;width:297px;text-align:right;top:94.00px;font-size:11px;line-height:11px;color:#000;transform:scaleX(0.980);transform-origin:100% 0">60,90</div><div class="t" style="left:1398px;top:94.00px;font-size:11px;line-height:11px;color:#000;transform:scaleX(0.990);transform-origin:0 0">391.20</div><div class="t" style="left:1395px;width:297px;text-align:right;top:94.00px;font-size:11px;line-height:11px;color:#000;transform:scaleX(0.980);transform-origin:100% 0">0,00</div><div class="t" style="left:1698px;top:94.00px;font-size:11px;line-height:11px;color:#000;transform:scaleX(0.990);transform-origin:0 0">600.18</div><div class="t" style="left:1595px;width:297px;text-align:right;top:94.00px;font-size:11px;line-height:11px;color:#000;transform:scaleX(0.980);transform-origin:100% 0">0,00</div><div class="t" style="left:1898px;top:94.00px;font-size:11px;line-height:11px;color:#000;transform:scaleX(0.990);transform-origin:0 0">39</div><div class="t" style="left:3px;width:40px;text-align:center;top:94.00px;font-size:11px;line-height:11px">5</div><div class="t" style="left:43px;top:116.00px;font-size:11px;line-height:11px;color:#000;transform:scaleX(0.977);transform-origin:0 0">E-Fatura</div><div class="t" style="left:143px;top:116.00px;font-size:11px;line-height:11px;color:#000;transform:scaleX(0.917);transform-origin:0 0">Satış</div><div class="t" style="left:243px;top:116.00px;font-size:11px;line-height:11px;color:#000;transform:scaleX(1.006);transform-origin:0 0">EF12024001115...</div><div class="t" style="left:346px;top:116.00px;font-size:11px;line-height:11px;color:#000;transform:scaleX(1.040);transform-origin:0 0">5.03.2024</div><div class="t" style="left:446px;top:116.00px;font-size:11px;line-height:11px;color:#000;transform:scaleX(0.940);transform-origin:0 0">Yorulmaz K...</div><div class="t" style="left:495px;width:297px;text-align:right;top:116.00px;font-size:11px;line-height:11px;color:#000;transform:scaleX(0.980);transform-origin:100% 0">789,70</div><div class="t" style="left:595px;width:297px;text-align:right;top:116.00px;font-size:11px;line-height:11px;color:#000;transform:scaleX(0.980);transform-origin:100% 0">157,94</div><div class="t" style="left:695px;width:297px;text-align:right;top:116.00px;font-size:11px;line-height:11px;color:#000;transform:scaleX(0.980);transform-origin:100% 0">947,64</div><div class="t" style="left:895px;width:297px;text-align:right;top:116.00px;font-size:11px;line-height:11px;color:#000;transform:scaleX(0.980);transform-origin:100% 0">789,70</div><div class="t" style="left:1198px;top:116.00px;font-size:11px;line-height:11px;color:#000;transform:scaleX(0.990);transform-origin:0 0">600.20</div><div class="t" style="left:1095px;width:297px;text-align:right;top:116.00px;font-size:11px;line-height:11px;color:#000;transform:scaleX(0.980);transform-origin:100% 0">157,94</div><div class="t" style="left:1398px;top:116.00px;font-size:11px;line-height:11px;color:#000;transform:scaleX(0.990);transform-origin:0 0">391.20</div><div class="t" style="left:1395px;width:297px;text-align:right;top:116.00px;font-size:11px;line-height:11px;color:#000;transform:scaleX(0.980);transform-origin:100% 0">0,00</div><div class="t" style="left:1698px;top:116.00px;font-size:11px;line-height:11px;color:#000;transform:scaleX(0.990);transform-origin:0 0">600.18</div><div class="t" style="left:1595px;width:297px;text-align:right;top:116.00px;font-size:11px;line-height:11px;color:#000;transform:scaleX(0.980);transform-origin:100% 0">0,00</div><div class="t" style="left:1898px;top:116.00px;font-size:11px;line-height:11px;color:#000;transform:scaleX(0.990);transform-origin:0 0">39</div><div class="t" style="left:3px;width:40px;text-align:center;top:116.00px;font-size:11px;line-height:11px">6</div><div class="t" style="left:43px;top:138.00px;font-size:11px;line-height:11px;color:#000;transform:scaleX(0.977);transform-origin:0 0">E-Arşiv Fatura</div><div class="t" style="left:143px;top:138.00px;font-size:11px;line-height:11px;color:#000;transform:scaleX(0.983);transform-origin:0 0">Istisna</div><div class="t" style="left:243px;top:138.00px;font-size:11px;line-height:11px;color:#000;transform:scaleX(1.006);transform-origin:0 0">EF12024001115...</div><div class="t" style="left:346px;top:138.00px;font-size:11px;line-height:11px;color:#000;transform:scaleX(1.040);transform-origin:0 0">5.03.2024</div><div class="t" style="left:446px;top:138.00px;font-size:11px;line-height:11px;color:#000;transform:scaleX(0.940);transform-origin:0 0">Yılmazlar Ti...</div><div class="t" style="left:520.5px;top:138.00px;font-size:11px;line-height:11px;color:#000;transform:scaleX(0.970);transform-origin:0 0">100.01</div><div class="t" style="left:495px;width:297px;text-align:right;top:138.00px;font-size:11px;line-height:11px;color:#000;transform:scaleX(0.980);transform-origin:100% 0">251,69</div><div class="t" style="left:595px;width:297px;text-align:right;top:138.00px;font-size:11px;line-height:11px;color:#000;transform:scaleX(0.980);transform-origin:100% 0">0,00</div><div class="t" style="left:695px;width:297px;text-align:right;top:138.00px;font-size:11px;line-height:11px;color:#000;transform:scaleX(0.980);transform-origin:100% 0">251,69</div><div class="t" style="left:895px;width:297px;text-align:right;top:138.00px;font-size:11px;line-height:11px;color:#000;transform:scaleX(0.980);transform-origin:100% 0">0,00</div><div class="t" style="left:1198px;top:138.00px;font-size:11px;line-height:11px;color:#000;transform:scaleX(0.990);transform-origin:0 0">600.20</div><div class="t" style="left:1095px;width:297px;text-align:right;top:138.00px;font-size:11px;line-height:11px;color:#000;transform:scaleX(0.980);transform-origin:100% 0">0,00</div><div class="t" style="left:1398px;top:138.00px;font-size:11px;line-height:11px;color:#000;transform:scaleX(0.990);transform-origin:0 0">391.20</div><div class="t" style="left:1395px;width:297px;text-align:right;top:138.00px;font-size:11px;line-height:11px;color:#000;transform:scaleX(0.980);transform-origin:100% 0">0,00</div><div class="t" style="left:1698px;top:138.00px;font-size:11px;line-height:11px;color:#000;transform:scaleX(0.990);transform-origin:0 0">600.18</div><div class="t" style="left:1595px;width:297px;text-align:right;top:138.00px;font-size:11px;line-height:11px;color:#000;transform:scaleX(0.980);transform-origin:100% 0">0,00</div><div class="t" style="left:1898px;top:138.00px;font-size:11px;line-height:11px;color:#000;transform:scaleX(0.990);transform-origin:0 0">39</div><div class="t" style="left:3px;width:40px;text-align:center;top:138.00px;font-size:11px;line-height:11px">7</div><div class="t" style="left:43px;top:160.00px;font-size:11px;line-height:11px;color:#000;transform:scaleX(0.977);transform-origin:0 0">E-Fatura</div><div class="t" style="left:143px;top:160.00px;font-size:11px;line-height:11px;color:#000;transform:scaleX(0.983);transform-origin:0 0">Istisna</div><div class="t" style="left:243px;top:160.00px;font-size:11px;line-height:11px;color:#000;transform:scaleX(1.006);transform-origin:0 0">EF12024001115...</div><div class="t" style="left:346px;top:160.00px;font-size:11px;line-height:11px;color:#000;transform:scaleX(1.040);transform-origin:0 0">6.03.2024</div><div class="t" style="left:446px;top:160.00px;font-size:11px;line-height:11px;color:#000;transform:scaleX(0.940);transform-origin:0 0">Akyüz Gıda</div><div class="t" style="left:520.5px;top:160.00px;font-size:11px;line-height:11px;color:#000;transform:scaleX(0.970);transform-origin:0 0">102.01</div><div class="t" style="left:495px;width:297px;text-align:right;top:160.00px;font-size:11px;line-height:11px;color:#000;transform:scaleX(0.980);transform-origin:100% 0">675,00</div><div class="t" style="left:595px;width:297px;text-align:right;top:160.00px;font-size:11px;line-height:11px;color:#000;transform:scaleX(0.980);transform-origin:100% 0">0,00</div><div class="t" style="left:695px;width:297px;text-align:right;top:160.00px;font-size:11px;line-height:11px;color:#000;transform:scaleX(0.980);transform-origin:100% 0">675,00</div><div class="t" style="left:895px;width:297px;text-align:right;top:160.00px;font-size:11px;line-height:11px;color:#000;transform:scaleX(0.980);transform-origin:100% 0">0,00</div><div class="t" style="left:1198px;top:160.00px;font-size:11px;line-height:11px;color:#000;transform:scaleX(0.990);transform-origin:0 0">600.20</div><div class="t" style="left:1095px;width:297px;text-align:right;top:160.00px;font-size:11px;line-height:11px;color:#000;transform:scaleX(0.980);transform-origin:100% 0">0,00</div><div class="t" style="left:1398px;top:160.00px;font-size:11px;line-height:11px;color:#000;transform:scaleX(0.990);transform-origin:0 0">391.20</div><div class="t" style="left:1395px;width:297px;text-align:right;top:160.00px;font-size:11px;line-height:11px;color:#000;transform:scaleX(0.980);transform-origin:100% 0">0,00</div><div class="t" style="left:1698px;top:160.00px;font-size:11px;line-height:11px;color:#000;transform:scaleX(0.990);transform-origin:0 0">600.18</div><div class="t" style="left:1595px;width:297px;text-align:right;top:160.00px;font-size:11px;line-height:11px;color:#000;transform:scaleX(0.980);transform-origin:100% 0">0,00</div><div class="t" style="left:1898px;top:160.00px;font-size:11px;line-height:11px;color:#000;transform:scaleX(0.990);transform-origin:0 0">39</div><div class="t" style="left:3px;width:40px;text-align:center;top:160.00px;font-size:11px;line-height:11px">8</div><div class="t" style="left:43px;top:182.00px;font-size:11px;line-height:11px;color:#000;transform:scaleX(0.977);transform-origin:0 0">E-Fatura</div><div class="t" style="left:143px;top:182.00px;font-size:11px;line-height:11px;color:#000;transform:scaleX(0.983);transform-origin:0 0">Istisna</div><div class="t" style="left:243px;top:182.00px;font-size:11px;line-height:11px;color:#000;transform:scaleX(1.006);transform-origin:0 0">EF12024001115...</div><div class="t" style="left:346px;top:182.00px;font-size:11px;line-height:11px;color:#000;transform:scaleX(1.040);transform-origin:0 0">6.03.2024</div><div class="t" style="left:446px;top:182.00px;font-size:11px;line-height:11px;color:#000;transform:scaleX(0.940);transform-origin:0 0">Bütüner Pa...</div><div class="t" style="left:520.5px;top:182.00px;font-size:11px;line-height:11px;color:#000;transform:scaleX(0.970);transform-origin:0 0">102.01</div><div class="t" style="left:495px;width:297px;text-align:right;top:182.00px;font-size:11px;line-height:11px;color:#000;transform:scaleX(0.980);transform-origin:100% 0">150,00</div><div class="t" style="left:595px;width:297px;text-align:right;top:182.00px;font-size:11px;line-height:11px;color:#000;transform:scaleX(0.980);transform-origin:100% 0">0,00</div><div class="t" style="left:695px;width:297px;text-align:right;top:182.00px;font-size:11px;line-height:11px;color:#000;transform:scaleX(0.980);transform-origin:100% 0">150,00</div><div class="t" style="left:895px;width:297px;text-align:right;top:182.00px;font-size:11px;line-height:11px;color:#000;transform:scaleX(0.980);transform-origin:100% 0">0,00</div><div class="t" style="left:1198px;top:182.00px;font-size:11px;line-height:11px;color:#000;transform:scaleX(0.990);transform-origin:0 0">600.20</div><div class="t" style="left:1095px;width:297px;text-align:right;top:182.00px;font-size:11px;line-height:11px;color:#000;transform:scaleX(0.980);transform-origin:100% 0">0,00</div><div class="t" style="left:1398px;top:182.00px;font-size:11px;line-height:11px;color:#000;transform:scaleX(0.990);transform-origin:0 0">391.20</div><div class="t" style="left:1395px;width:297px;text-align:right;top:182.00px;font-size:11px;line-height:11px;color:#000;transform:scaleX(0.980);transform-origin:100% 0">0,00</div><div class="t" style="left:1698px;top:182.00px;font-size:11px;line-height:11px;color:#000;transform:scaleX(0.990);transform-origin:0 0">600.18</div><div class="t" style="left:1595px;width:297px;text-align:right;top:182.00px;font-size:11px;line-height:11px;color:#000;transform:scaleX(0.980);transform-origin:100% 0">0,00</div><div class="t" style="left:1898px;top:182.00px;font-size:11px;line-height:11px;color:#000;transform:scaleX(0.990);transform-origin:0 0">39</div><div class="t" style="left:3px;width:40px;text-align:center;top:182.00px;font-size:11px;line-height:11px">9</div><div class="t" style="left:43px;top:204.00px;font-size:11px;line-height:11px;color:#000;transform:scaleX(0.977);transform-origin:0 0">E-Fatura</div><div class="t" style="left:143px;top:204.00px;font-size:11px;line-height:11px;color:#000;transform:scaleX(0.983);transform-origin:0 0">Istisna</div><div class="t" style="left:243px;top:204.00px;font-size:11px;line-height:11px;color:#000;transform:scaleX(1.006);transform-origin:0 0">EF12024001115...</div><div class="t" style="left:346px;top:204.00px;font-size:11px;line-height:11px;color:#000;transform:scaleX(1.040);transform-origin:0 0">6.03.2024</div><div class="t" style="left:446px;top:204.00px;font-size:11px;line-height:11px;color:#000;transform:scaleX(0.940);transform-origin:0 0">Polat Gıda</div><div class="t" style="left:520.5px;top:204.00px;font-size:11px;line-height:11px;color:#000;transform:scaleX(0.970);transform-origin:0 0">100.01</div><div class="t" style="left:495px;width:297px;text-align:right;top:204.00px;font-size:11px;line-height:11px;color:#000;transform:scaleX(0.980);transform-origin:100% 0">150,00</div><div class="t" style="left:595px;width:297px;text-align:right;top:204.00px;font-size:11px;line-height:11px;color:#000;transform:scaleX(0.980);transform-origin:100% 0">0,00</div><div class="t" style="left:695px;width:297px;text-align:right;top:204.00px;font-size:11px;line-height:11px;color:#000;transform:scaleX(0.980);transform-origin:100% 0">150,00</div><div class="t" style="left:895px;width:297px;text-align:right;top:204.00px;font-size:11px;line-height:11px;color:#000;transform:scaleX(0.980);transform-origin:100% 0">0,00</div><div class="t" style="left:1198px;top:204.00px;font-size:11px;line-height:11px;color:#000;transform:scaleX(0.990);transform-origin:0 0">600.20</div><div class="t" style="left:1095px;width:297px;text-align:right;top:204.00px;font-size:11px;line-height:11px;color:#000;transform:scaleX(0.980);transform-origin:100% 0">0,00</div><div class="t" style="left:1398px;top:204.00px;font-size:11px;line-height:11px;color:#000;transform:scaleX(0.990);transform-origin:0 0">391.20</div><div class="t" style="left:1395px;width:297px;text-align:right;top:204.00px;font-size:11px;line-height:11px;color:#000;transform:scaleX(0.980);transform-origin:100% 0">0,00</div><div class="t" style="left:1698px;top:204.00px;font-size:11px;line-height:11px;color:#000;transform:scaleX(0.990);transform-origin:0 0">600.18</div><div class="t" style="left:1595px;width:297px;text-align:right;top:204.00px;font-size:11px;line-height:11px;color:#000;transform:scaleX(0.980);transform-origin:100% 0">0,00</div><div class="t" style="left:1898px;top:204.00px;font-size:11px;line-height:11px;color:#000;transform:scaleX(0.990);transform-origin:0 0">39</div><div class="t" style="left:3px;width:40px;text-align:center;top:204.00px;font-size:11px;line-height:11px">10</div><div class="t" style="left:43px;top:226.00px;font-size:11px;line-height:11px;color:#000;transform:scaleX(0.977);transform-origin:0 0">E-Fatura</div><div class="t" style="left:143px;top:226.00px;font-size:11px;line-height:11px;color:#000;transform:scaleX(0.917);transform-origin:0 0">Satış</div><div class="t" style="left:243px;top:226.00px;font-size:11px;line-height:11px;color:#000;transform:scaleX(1.006);transform-origin:0 0">EF12024001115...</div><div class="t" style="left:346px;top:226.00px;font-size:11px;line-height:11px;color:#000;transform:scaleX(1.040);transform-origin:0 0">6.03.2024</div><div class="t" style="left:446px;top:226.00px;font-size:11px;line-height:11px;color:#000;transform:scaleX(0.940);transform-origin:0 0">Deniz Plastik</div><div class="t" style="left:495px;width:297px;text-align:right;top:226.00px;font-size:11px;line-height:11px;color:#000;transform:scaleX(0.980);transform-origin:100% 0">3.416,67</div><div class="t" style="left:595px;width:297px;text-align:right;top:226.00px;font-size:11px;line-height:11px;color:#000;transform:scaleX(0.980);transform-origin:100% 0">683,33</div><div class="t" style="left:695px;width:297px;text-align:right;top:226.00px;font-size:11px;line-height:11px;color:#000;transform:scaleX(0.980);transform-origin:100% 0">4.100,00</div><div class="t" style="left:895px;width:297px;text-align:right;top:226.00px;font-size:11px;line-height:11px;color:#000;transform:scaleX(0.980);transform-origin:100% 0">3.416,67</div><div class="t" style="left:1198px;top:226.00px;font-size:11px;line-height:11px;color:#000;transform:scaleX(0.990);transform-origin:0 0">600.20</div><div class="t" style="left:1095px;width:297px;text-align:right;top:226.00px;font-size:11px;line-height:11px;color:#000;transform:scaleX(0.980);transform-origin:100% 0">683,33</div><div class="t" style="left:1398px;top:226.00px;font-size:11px;line-height:11px;color:#000;transform:scaleX(0.990);transform-origin:0 0">391.20</div><div class="t" style="left:1395px;width:297px;text-align:right;top:226.00px;font-size:11px;line-height:11px;color:#000;transform:scaleX(0.980);transform-origin:100% 0">0,00</div><div class="t" style="left:1698px;top:226.00px;font-size:11px;line-height:11px;color:#000;transform:scaleX(0.990);transform-origin:0 0">600.18</div><div class="t" style="left:1595px;width:297px;text-align:right;top:226.00px;font-size:11px;line-height:11px;color:#000;transform:scaleX(0.980);transform-origin:100% 0">0,00</div><div class="t" style="left:1898px;top:226.00px;font-size:11px;line-height:11px;color:#000;transform:scaleX(0.990);transform-origin:0 0">39</div><div class="t" style="left:3px;width:40px;text-align:center;top:226.00px;font-size:11px;line-height:11px">11</div><div class="t" style="left:43px;top:248.00px;font-size:11px;line-height:11px;color:#000;transform:scaleX(0.977);transform-origin:0 0">E-Arşiv Fatura</div><div class="t" style="left:143px;top:248.00px;font-size:11px;line-height:11px;color:#000;transform:scaleX(0.917);transform-origin:0 0">Satış</div><div class="t" style="left:243px;top:248.00px;font-size:11px;line-height:11px;color:#000;transform:scaleX(1.006);transform-origin:0 0">EA12024001115...</div><div class="t" style="left:346px;top:248.00px;font-size:11px;line-height:11px;color:#000;transform:scaleX(1.040);transform-origin:0 0">6.03.2024</div><div class="t" style="left:446px;top:248.00px;font-size:11px;line-height:11px;color:#000;transform:scaleX(0.940);transform-origin:0 0">Kırlangıç Ki...</div><div class="t" style="left:520.5px;top:248.00px;font-size:11px;line-height:11px;color:#000;transform:scaleX(0.970);transform-origin:0 0">100.01</div><div class="t" style="left:495px;width:297px;text-align:right;top:248.00px;font-size:11px;line-height:11px;color:#000;transform:scaleX(0.980);transform-origin:100% 0">313,14</div><div class="t" style="left:595px;width:297px;text-align:right;top:248.00px;font-size:11px;line-height:11px;color:#000;transform:scaleX(0.980);transform-origin:100% 0">62,63</div><div class="t" style="left:695px;width:297px;text-align:right;top:248.00px;font-size:11px;line-height:11px;color:#000;transform:scaleX(0.980);transform-origin:100% 0">375,77</div><div class="t" style="left:895px;width:297px;text-align:right;top:248.00px;font-size:11px;line-height:11px;color:#000;transform:scaleX(0.980);transform-origin:100% 0">313,14</div><div class="t" style="left:1198px;top:248.00px;font-size:11px;line-height:11px;color:#000;transform:scaleX(0.990);transform-origin:0 0">600.20</div><div class="t" style="left:1095px;width:297px;text-align:right;top:248.00px;font-size:11px;line-height:11px;color:#000;transform:scaleX(0.980);transform-origin:100% 0">62,63</div><div class="t" style="left:1398px;top:248.00px;font-size:11px;line-height:11px;color:#000;transform:scaleX(0.990);transform-origin:0 0">391.20</div><div class="t" style="left:1395px;width:297px;text-align:right;top:248.00px;font-size:11px;line-height:11px;color:#000;transform:scaleX(0.980);transform-origin:100% 0">0,00</div><div class="t" style="left:1698px;top:248.00px;font-size:11px;line-height:11px;color:#000;transform:scaleX(0.990);transform-origin:0 0">600.18</div><div class="t" style="left:1595px;width:297px;text-align:right;top:248.00px;font-size:11px;line-height:11px;color:#000;transform:scaleX(0.980);transform-origin:100% 0">0,00</div><div class="t" style="left:1898px;top:248.00px;font-size:11px;line-height:11px;color:#000;transform:scaleX(0.990);transform-origin:0 0">39</div><div class="t" style="left:3px;width:40px;text-align:center;top:248.00px;font-size:11px;line-height:11px">12</div><div class="t" style="left:43px;top:270.00px;font-size:11px;line-height:11px;color:#000;transform:scaleX(0.977);transform-origin:0 0">E-Fatura</div><div class="t" style="left:143px;top:270.00px;font-size:11px;line-height:11px;color:#000;transform:scaleX(0.917);transform-origin:0 0">Satış</div><div class="t" style="left:243px;top:270.00px;font-size:11px;line-height:11px;color:#000;transform:scaleX(1.006);transform-origin:0 0">EF12024001115...</div><div class="t" style="left:346px;top:270.00px;font-size:11px;line-height:11px;color:#000;transform:scaleX(1.040);transform-origin:0 0">6.03.2024</div><div class="t" style="left:446px;top:270.00px;font-size:11px;line-height:11px;color:#000;transform:scaleX(0.940);transform-origin:0 0">Durgun İnş...</div><div class="t" style="left:520.5px;top:270.00px;font-size:11px;line-height:11px;color:#000;transform:scaleX(0.970);transform-origin:0 0">100.01</div><div class="t" style="left:495px;width:297px;text-align:right;top:270.00px;font-size:11px;line-height:11px;color:#000;transform:scaleX(0.980);transform-origin:100% 0">901,67</div><div class="t" style="left:595px;width:297px;text-align:right;top:270.00px;font-size:11px;line-height:11px;color:#000;transform:scaleX(0.980);transform-origin:100% 0">180,33</div><div class="t" style="left:695px;width:297px;text-align:right;top:270.00px;font-size:11px;line-height:11px;color:#000;transform:scaleX(0.980);transform-origin:100% 0">1.082,00</div><div class="t" style="left:895px;width:297px;text-align:right;top:270.00px;font-size:11px;line-height:11px;color:#000;transform:scaleX(0.980);transform-origin:100% 0">901,67</div><div class="t" style="left:1198px;top:270.00px;font-size:11px;line-height:11px;color:#000;transform:scaleX(0.990);transform-origin:0 0">600.20</div><div class="t" style="left:1095px;width:297px;text-align:right;top:270.00px;font-size:11px;line-height:11px;color:#000;transform:scaleX(0.980);transform-origin:100% 0">180,33</div><div class="t" style="left:1398px;top:270.00px;font-size:11px;line-height:11px;color:#000;transform:scaleX(0.990);transform-origin:0 0">391.20</div><div class="t" style="left:1395px;width:297px;text-align:right;top:270.00px;font-size:11px;line-height:11px;color:#000;transform:scaleX(0.980);transform-origin:100% 0">0,00</div><div class="t" style="left:1698px;top:270.00px;font-size:11px;line-height:11px;color:#000;transform:scaleX(0.990);transform-origin:0 0">600.18</div><div class="t" style="left:1595px;width:297px;text-align:right;top:270.00px;font-size:11px;line-height:11px;color:#000;transform:scaleX(0.980);transform-origin:100% 0">0,00</div><div class="t" style="left:1898px;top:270.00px;font-size:11px;line-height:11px;color:#000;transform:scaleX(0.990);transform-origin:0 0">39</div><div class="t" style="left:3px;width:40px;text-align:center;top:270.00px;font-size:11px;line-height:11px">13</div><div class="t" style="left:43px;top:292.00px;font-size:11px;line-height:11px;color:#000;transform:scaleX(0.977);transform-origin:0 0">E-Fatura</div><div class="t" style="left:143px;top:292.00px;font-size:11px;line-height:11px;color:#000;transform:scaleX(0.917);transform-origin:0 0">Satış</div><div class="t" style="left:243px;top:292.00px;font-size:11px;line-height:11px;color:#000;transform:scaleX(1.006);transform-origin:0 0">EF12024001115...</div><div class="t" style="left:346px;top:292.00px;font-size:11px;line-height:11px;color:#000;transform:scaleX(1.040);transform-origin:0 0">7.03.2024</div><div class="t" style="left:446px;top:292.00px;font-size:11px;line-height:11px;color:#000;transform:scaleX(0.940);transform-origin:0 0">Kaptan Ma...</div><div class="t" style="left:520.5px;top:292.00px;font-size:11px;line-height:11px;color:#000;transform:scaleX(0.970);transform-origin:0 0">102.01</div><div class="t" style="left:495px;width:297px;text-align:right;top:292.00px;font-size:11px;line-height:11px;color:#000;transform:scaleX(0.980);transform-origin:100% 0">51.478,63</div><div class="t" style="left:595px;width:297px;text-align:right;top:292.00px;font-size:11px;line-height:11px;color:#000;transform:scaleX(0.980);transform-origin:100% 0">10.295,73</div><div class="t" style="left:695px;width:297px;text-align:right;top:292.00px;font-size:11px;line-height:11px;color:#000;transform:scaleX(0.980);transform-origin:100% 0">61.774,36</div><div class="t" style="left:895px;width:297px;text-align:right;top:292.00px;font-size:11px;line-height:11px;color:#000;transform:scaleX(0.980);transform-origin:100% 0">51.478,63</div><div class="t" style="left:1198px;top:292.00px;font-size:11px;line-height:11px;color:#000;transform:scaleX(0.990);transform-origin:0 0">600.20</div><div class="t" style="left:1095px;width:297px;text-align:right;top:292.00px;font-size:11px;line-height:11px;color:#000;transform:scaleX(0.980);transform-origin:100% 0">10.295,73</div><div class="t" style="left:1398px;top:292.00px;font-size:11px;line-height:11px;color:#000;transform:scaleX(0.990);transform-origin:0 0">391.20</div><div class="t" style="left:1395px;width:297px;text-align:right;top:292.00px;font-size:11px;line-height:11px;color:#000;transform:scaleX(0.980);transform-origin:100% 0">0,00</div><div class="t" style="left:1698px;top:292.00px;font-size:11px;line-height:11px;color:#000;transform:scaleX(0.990);transform-origin:0 0">600.18</div><div class="t" style="left:1595px;width:297px;text-align:right;top:292.00px;font-size:11px;line-height:11px;color:#000;transform:scaleX(0.980);transform-origin:100% 0">0,00</div><div class="t" style="left:1898px;top:292.00px;font-size:11px;line-height:11px;color:#000;transform:scaleX(0.990);transform-origin:0 0">39</div><div class="t" style="left:3px;width:40px;text-align:center;top:292.00px;font-size:11px;line-height:11px">14</div><div class="t" style="left:4px;width:40px;text-align:center;top:314.00px;font-size:11px;line-height:11px">15</div></div><svg style="left:11px;top:267px" width="6" height="10"><path d="M0 0 L5.5 4.5 L0 9 Z" fill="#333"/></svg><svg style="left:13px;top:576px" width="6" height="6"><path d="M3 0.5V5.5M0.8 1.7L5.2 4.3M5.2 1.7L0.8 4.3" stroke="#444" stroke-width="1.2"/></svg><div style="left:520px;top:183px;width:81px;height:388px;border:3px solid #c4005c"></div><div style="left:5px;top:951px;width:1910px;height:17px;background:#f0f0f0"></div><div style="left:22px;top:952px;width:722px;height:15px;background:#cdcdcd"></div><svg style="left:9px;top:954px" width="9" height="11"><path d="M6.2 1.8 L2.6 5.5 L6.2 9.2" fill="none" stroke="#505050" stroke-width="2.3"/></svg><svg style="left:1902px;top:954px" width="9" height="11"><path d="M2.8 1.8 L6.4 5.5 L2.8 9.2" fill="none" stroke="#505050" stroke-width="2.3"/></svg><div style="left:0px;top:991px;width:1500px;height:1px;background:#d7d7d7"></div><div style="left:2px;top:994px;width:89px;height:19px;border:1px solid #d7d7d7;"></div><div class="t" style="left:7.50px;top:998.00px;font-size:12px;line-height:12px;font-weight:normal;color:#000;transform:scaleX(0.9030);transform-origin:0 0;">Fatura Sayısı:14</div><div style="left:93px;top:994px;width:72px;height:19px;border:1px solid #d7d7d7;background:#fff;"></div><div style="left:94px;top:995px;width:69px;height:16px;background:#008000"></div><div style="left:93px;top:1012px;width:72px;height:1px;background:#008000"></div><div style="left:164px;top:994px;width:1px;height:19px;background:#008000"></div><div class="t" style="left:101.25px;top:998.00px;font-size:12px;line-height:12px;font-weight:normal;color:#fff;transform:scaleX(0.9209);transform-origin:0 0;">Bakiye:0,00</div><div style="left:166px;top:994px;width:162px;height:19px;border:1px solid #d7d7d7;"></div><div class="t" style="left:173.25px;top:998.00px;font-size:12px;line-height:12px;font-weight:normal;color:#000;transform:scaleX(0.9525);transform-origin:0 0;">Kdv Hariç Toplam:125.130,80</div><div style="left:329px;top:994px;width:126px;height:19px;border:1px solid #d7d7d7;"></div><div class="t" style="left:337.50px;top:998.00px;font-size:12px;line-height:12px;font-weight:normal;color:#000;transform:scaleX(0.9421);transform-origin:0 0;">Toplam Kdv:24.780,82</div><div style="left:456px;top:994px;width:107px;height:19px;border:1px solid #d7d7d7;"></div><div class="t" style="left:464.25px;top:998.00px;font-size:12px;line-height:12px;font-weight:normal;color:#000;transform:scaleX(0.9433);transform-origin:0 0;">Diğer Vergiler:0,00</div><div style="left:564px;top:994px;width:142px;height:19px;border:1px solid #d7d7d7;"></div><div class="t" style="left:572.50px;top:998.00px;font-size:12px;line-height:12px;font-weight:normal;color:#000;transform:scaleX(0.9408);transform-origin:0 0;">Genel Toplam:149.911,62</div><div style="left:707px;top:994px;width:1px;height:19px;background:#c8c8c8"></div><div style="left:711px;top:994px;width:1px;height:19px;background:#c8c8c8"></div><div style="left:0px;top:1015px;width:1919px;height:1px;background:#a0a0a0"></div><div style="left:1664px;top:985px;width:128px;height:21px;background:#008000;border:1px solid #adadad;box-shadow:inset 0 0 0 2px #e1e1e1"></div><div class="t" style="left:1672.00px;top:990.00px;font-size:12px;line-height:12px;font-weight:bold;color:#fff;transform:scaleX(1.0290);transform-origin:0 0;">DIŞARI AKTAR - F2</div><div style="left:1800px;top:985px;width:115px;height:21px;background:#d25e5e;border:1px solid #adadad;box-shadow:inset 0 0 0 2px #e1e1e1"></div><div class="t" style="left:1814.25px;top:990.00px;font-size:12px;line-height:12px;font-weight:bold;color:#fff;transform:scaleX(1.0005);transform-origin:0 0;">VAZGEÇ - ESC</div><div style="left:2px;top:1019px;width:46px;height:18px;border:1px solid #dcdcdc"></div><div class="t" style="left:6.25px;top:1023.00px;font-size:12px;line-height:12px;font-weight:normal;color:#000;transform:scaleX(0.8495);transform-origin:0 0;">DEBUG</div><div style="left:49px;top:1019px;width:96px;height:18px;border:1px solid #dcdcdc"></div><div class="t" style="left:54.50px;top:1023.00px;font-size:12px;line-height:12px;font-weight:normal;color:#000;transform:scaleX(0.9221);transform-origin:0 0;">Versiyon : 5.1.0.0</div><div style="left:763px;top:475px;width:412px;height:146px;background:#fff;border:3px solid #c4005c;box-shadow:0 4px 12px rgba(0,0,0,0.28)"></div><div style="left:766px;top:578px;width:406px;height:40px;background:#f0f0f0"></div><div class="t" style="left:774.50px;top:485.00px;font-size:12px;line-height:12px;font-weight:normal;color:#000;transform:scaleX(0.9373);transform-origin:0 0;">Cari Eşleştirme</div><svg style="left:1153px;top:485px" width="11" height="11"><path d="M0.5 0.5 L10.5 10.5 M10.5 0.5 L0.5 10.5" stroke="#999" stroke-width="1"/></svg><div class="t" style="left:777.00px;top:531.00px;font-size:11px;line-height:11px;font-weight:normal;color:#000;transform:scaleX(1.0472);transform-origin:0 0;">Yıldız Nakliyat için kuralla oluşturulan bir hesap kodu var.100.01 yerine</div><div class="t" style="left:777.00px;top:544.00px;font-size:11px;line-height:11px;font-weight:normal;color:#000;transform:scaleX(1.0309);transform-origin:0 0;">120.02 kodunu seçmek istiyor musunuz?</div><div style="left:984px;top:587px;width:83px;height:24px;border:3px solid #c4005c;background:#e1e1e1"></div><div style="left:988px;top:591px;width:75px;height:16px;border:1px dotted #000"></div><div class="t" style="left:1015.00px;top:594.00px;font-size:11px;line-height:11px;font-weight:normal;color:#000;transform:scaleX(0.9427);transform-origin:0 0;">Evet</div><div style="left:1015px;top:605px;width:7px;height:1px;background:#000"></div><div style="left:1075px;top:588px;width:81px;height:22px;border:1px solid #adadad;background:#e1e1e1"></div><div class="t" style="left:1102.00px;top:594.00px;font-size:11px;line-height:11px;font-weight:normal;color:#000;transform:scaleX(0.9894);transform-origin:0 0;">Hayır</div><div style="left:1102px;top:605px;width:8px;height:1px;background:#000"></div></body></html>
